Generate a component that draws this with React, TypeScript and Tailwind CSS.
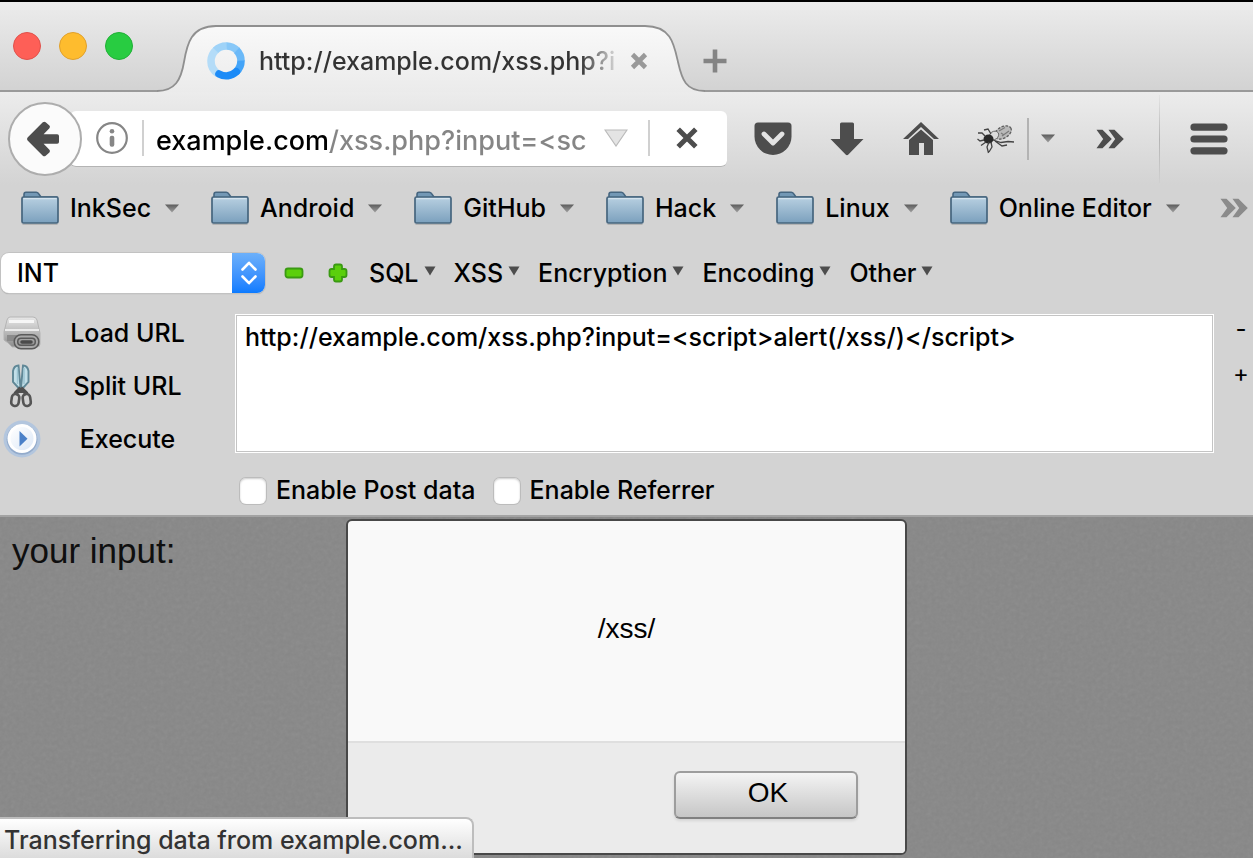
import React from "react";

function Caret({ className = "" }: { className?: string }) {
  return (
    <svg width="14" height="9" viewBox="0 0 14 9" className={"shrink-0 " + className} aria-hidden="true">
      <defs>
        <linearGradient id="caret" x1="0" y1="0" x2="0" y2="1">
          <stop offset="0" stopColor="#5c5c5c" />
          <stop offset="1" stopColor="#a0a0a0" />
        </linearGradient>
      </defs>
      <path d="M0 0.5h14L7 8.5z" fill="url(#caret)" />
    </svg>
  );
}

function SmallCaret() {
  return (
    <svg width="12" height="10" viewBox="0 0 12 10" className="mb-1 shrink-0" aria-hidden="true">
      <path d="M0.5 0.5h11L6 9.5z" fill="#4d4d4d" />
    </svg>
  );
}

function Folder() {
  return (
    <svg width="38" height="34" viewBox="0 0 38 34" className="shrink-0" aria-hidden="true">
      <defs>
        <linearGradient id="folder" x1="0" y1="0" x2="0" y2="1">
          <stop offset="0" stopColor="#b8d0e1" />
          <stop offset="1" stopColor="#7ba0bd" />
        </linearGradient>
      </defs>
      <path d="M1.5 33.4h35" stroke="#b3b3b3" strokeWidth="1.2" />
      <path d="M3 8V3.4Q3 1.2 5 1.2h10.2q1.400 0 2.200 1.200L20 6H36V9H2z" fill="#7398b5" stroke="#466680" strokeWidth="1.600" strokeLinejoin="round" />
      <rect x="1" y="6" width="36" height="26" rx="1.500" fill="url(#folder)" stroke="#46657e" strokeWidth="1.700" />
      <path d="M2.500 7.600h33" stroke="#d4e3ee" strokeWidth="1.300" />
    </svg>
  );
}

function Chevrons({ color }: { color: string }) {
  return (
    <svg width="28" height="20" viewBox="0 0 28 20" className="shrink-0" aria-hidden="true">
      <path d="M0.500 0.800H6.500L15.800 10 6.500 19.200H0.500L7.200 10zM12.500 0.800H18.500L27.800 10 18.500 19.200H12.500L19.200 10z" fill={color} />
    </svg>
  );
}

function Separator({ className = "" }: { className?: string }) {
  return <span className={"w-[2px] shrink-0 " + className} />;
}

function TabStrip() {
  return (
    <header className="flex h-[90px] items-end bg-linear-to-b from-[#ececec] to-[#d2d2d2] shadow-[inset_0_-2px_0_#9a9a9a]">
      <div className="flex h-[90px] w-[157px] shrink-0 items-start gap-[18px] pt-[30px] pl-[13px]">
        <button aria-label="Close window" className="size-7 rounded-full border border-[#e0514b] bg-[#fe5f57]" />
        <button aria-label="Minimize window" className="size-7 rounded-full border border-[#e0a02c] bg-[#febc2e]" />
        <button aria-label="Zoom window" className="size-7 rounded-full border border-[#20b036] bg-[#28cc41]" />
      </div>
      <div className="relative isolate flex h-[68px] w-[548px] shrink-0 items-center gap-[14px] pt-[5px] pr-[57px] pl-[50px]">
        <svg className="absolute inset-0 -z-10 size-full" viewBox="0 0 548 68" preserveAspectRatio="none" aria-hidden="true">
          <defs>
            <linearGradient id="tab" x1="0" y1="0" x2="0" y2="1">
              <stop offset="0" stopColor="#f9f9f9" />
              <stop offset="1" stopColor="#ebebeb" />
            </linearGradient>
          </defs>
          <path
            d="M0 68V66.800C18 66.800 24 56 27 38S34 2 59 2H488C514 2 517 20 521 38S529 66.800 548 66.800V68z"
            fill="url(#tab)"
          />
          <path
            d="M0 67C18 67 24 56 27 38S34 2 59 2H488C514 2 517 20 521 38S529 67 548 67"
            fill="none"
            stroke="#8f8f8f"
            strokeWidth="1.800"
          />
        </svg>
        <svg width="38" height="38" viewBox="0 0 38 38" className="shrink-0" aria-hidden="true">
          <g fill="none" strokeWidth="7.600">
            <path d="M10.800 31.600A15 15 0 0 1 4 19A15 15 0 0 1 9 8" stroke="#b4dcf8" />
            <path d="M8.600 8.400A15 15 0 0 1 20 4" stroke="#9fd3f8" />
            <path d="M19.600 4A15 15 0 0 1 30 8.400" stroke="#88c8f8" />
            <path d="M29.600 8.200A15 15 0 0 1 34 19" stroke="#6bb9f8" />
            <path d="M34 18.600A15 15 0 0 1 29 30" stroke="#43a4f8" />
            <path d="M29.300 29.800A15 15 0 0 1 12 32" stroke="#1c8bf7" strokeLinecap="round" />
          </g>
        </svg>
        <span className="min-w-0 flex-1 overflow-hidden whitespace-nowrap bg-linear-to-r from-[#333] from-90% to-[#33333322] bg-clip-text text-transparent">
          http://example.com/xss.php?i
        </span>
        <button aria-label="Close tab" className="shrink-0">
          <svg width="18" height="18" viewBox="0 0 18 18" aria-hidden="true">
            <path d="M2.500 2.500l13 13M15.500 2.500l-13 13" stroke="#999" strokeWidth="4.600" />
          </svg>
        </button>
      </div>
      <button aria-label="New tab" className="mb-[19px] -ml-[2px] shrink-0">
        <svg width="24" height="24" viewBox="0 0 24 24" aria-hidden="true">
          <path d="M12 0.500v23M0.500 12h23" stroke="#848484" strokeWidth="4.600" />
        </svg>
      </button>
    </header>
  );
}

function Fly() {
  return (
    <svg width="38" height="30" viewBox="0 0 38 30" aria-hidden="true">
      <ellipse cx="26" cy="8.500" rx="9.500" ry="6" transform="rotate(-30 26 8.500)" fill="#b9b9b9" />
      <ellipse cx="26" cy="8.500" rx="9" ry="5.600" transform="rotate(-30 26 8.500)" fill="none" stroke="#5f5f5f" strokeWidth="1.300" strokeDasharray="2.500 1.500" />
      <path d="M22 7l6-3.500M25 12l7-5M24 9l3 2" stroke="#7a7a7a" strokeWidth="1.200" />
      <ellipse cx="17" cy="11.500" rx="5" ry="4" transform="rotate(-35 17 11.500)" fill="#dcdcdc" stroke="#666" strokeWidth="0.900" />
      <ellipse cx="11.500" cy="15" rx="5" ry="4.600" fill="#292929" />
      <path
        d="M8 12L5 9 1 9M7 16L3 17 0.500 15M9 18L4 21.500M12 18l-2 5 1.500 6M14 18l1 5-3 5M16 16l8 2.500 7-1 6 0.500M18 17l7 5 5-1M14 10L11 5 7 6"
        fill="none"
        stroke="#444"
        strokeWidth="1.300"
      />
    </svg>
  );
}

function NavBar() {
  return (
    <nav className="flex h-[93px] items-center bg-linear-to-b from-[#ececec] to-[#d3d3d3] pl-2">
      <button aria-label="Back" className="z-10 flex size-[74px] shrink-0 items-center justify-center rounded-full border-2 border-[#adadad] bg-[#fbfbfb] pr-1">
        <svg width="34" height="36" viewBox="0 0 34 36" aria-hidden="true">
          <path d="M1.600 16.600L16.800 1.200Q18.300 0.200 19.700 1.200L23.400 4.600Q24.600 6 23.400 7.200L17.600 13.200H31.200Q33 13.200 33 15V21Q33 22.800 31.200 22.800H17.600L23.400 28.800Q24.600 30 23.400 31.400L19.700 34.800Q18.300 35.800 16.800 34.800L1.600 19.400Q0.400 18 1.600 16.600z" fill="#4d4d4d" />
        </svg>
      </button>
      <div className="-ml-3 flex h-14 min-w-0 flex-1 items-center rounded-md border-b border-[#b4b4b4] bg-white pl-[26px]">
        <button aria-label="Site information" className="shrink-0">
          <svg width="32" height="32" viewBox="0 0 32 32" aria-hidden="true">
            <circle cx="16" cy="16" r="14.800" fill="none" stroke="#868686" strokeWidth="2.200" />
            <circle cx="16" cy="9.200" r="2.300" fill="#868686" />
            <rect x="13.700" y="13.700" width="4.600" height="11" rx="2" fill="#868686" />
          </svg>
        </button>
        <Separator className="ml-[14px] h-9 bg-[#d0d0d0]" />
        <input
          aria-label="Address"
          defaultValue="example.com/xss.php?input=<sc"
          className="ml-3 h-11 min-w-0 flex-1 bg-linear-to-r from-black from-[174px] to-[#858585] to-[174px] bg-clip-text pt-1 text-[27px] text-transparent caret-black outline-none"
        />
        <button aria-label="Show history" className="ml-3 shrink-0">
          <svg width="24" height="18" viewBox="0 0 24 18" aria-hidden="true">
            <path d="M1 1h22L12 17z" fill="#e4e4e4" stroke="#bababa" strokeWidth="1.200" />
          </svg>
        </button>
        <Separator className="ml-5 h-9 bg-[#d0d0d0]" />
        <button aria-label="Stop" className="mr-[29px] ml-[26px] shrink-0">
          <svg width="22" height="22" viewBox="0 0 22 22" aria-hidden="true">
            <path d="M2.200 2.200l17.600 17.600M19.800 2.200L2.200 19.800" stroke="#4d4d4d" strokeWidth="5" />
          </svg>
        </button>
      </div>
      <div className="ml-[27px] flex shrink-0 items-center">
        <button aria-label="Save to Pocket">
          <svg width="38" height="34" viewBox="0 0 38 34" aria-hidden="true">
            <path d="M4 0.500H34Q37.500 0.500 37.500 4V14.500A18.500 18.500 0 0 1 0.500 14.500V4Q0.500 0.500 4 0.500z" fill="#4d4d4d" />
            <path d="M10 12l9 9 9-9" fill="none" stroke="#e3e3e3" strokeWidth="4.800" strokeLinecap="round" strokeLinejoin="round" />
          </svg>
        </button>
        <button aria-label="Downloads" className="ml-[38px]">
          <svg width="34" height="34" viewBox="0 0 34 34" aria-hidden="true">
            <path d="M11.500 0.500H22.500Q24 0.500 24 2V17H33.500L18.400 32.600Q17 34 15.600 32.600L0.500 17H10V2Q10 0.500 11.500 0.500z" fill="#4d4d4d" />
          </svg>
        </button>
        <button aria-label="Home" className="ml-[39px]">
          <svg width="36" height="34" viewBox="0 0 36 34" aria-hidden="true">
            <path d="M18 0L36 17H31L18 5 5 17H0z" fill="#4d4d4d" />
            <path d="M18 7.500L30 18V33H21V21H16V33H6V18z" fill="#4d4d4d" />
          </svg>
        </button>
        <button aria-label="Firebug" className="ml-[38px]">
          <Fly />
        </button>
        <Separator className="ml-3 h-[42px] bg-[#b3b3b3]" />
        <button aria-label="Firebug menu" className="ml-[11px]">
          <Caret className="w-4" />
        </button>
        <button aria-label="More tools" className="ml-[40px]">
          <Chevrons color="#4d4d4d" />
        </button>
        <span className="ml-[35px] h-[88px] w-px bg-linear-to-b from-[#e4e4e4] via-[#b4b4b4] to-[#d0d0d0]" />
        <button aria-label="Open menu" className="mr-[25px] ml-[30px]">
          <svg width="38" height="32" viewBox="0 0 38 32" aria-hidden="true">
            <path d="M4 4.200H34M4 16H34M4 27.800H34" stroke="#4d4d4d" strokeWidth="7.200" strokeLinecap="round" />
          </svg>
        </button>
      </div>
    </nav>
  );
}

const bookmarks = ["InkSec", "Android", "GitHub", "Hack", "Linux", "Online Editor"];

function BookmarksBar() {
  return (
    <nav className="mb-[9px] flex h-[46px] items-center pr-[5px] pl-[21px]" aria-label="Bookmarks">
      <ul className="flex items-center gap-8">
        {bookmarks.map((name) => (
          <li key={name}>
            <button className="flex items-center whitespace-nowrap">
              <Folder />
              <span className="ml-[11px]">{name}</span>
              <Caret className="ml-[14px]" />
            </button>
          </li>
        ))}
      </ul>
      <button aria-label="More bookmarks" className="ml-auto">
        <Chevrons color="#8b8b8b" />
      </button>
    </nav>
  );
}

const menus = ["SQL", "XSS", "Encryption", "Encoding", "Other"];

function HackMenu() {
  return (
    <div className="flex h-[66px] items-center">
      <div className="relative ml-px h-10 w-[264px] shrink-0">
        <select aria-label="Payload type" className="h-10 w-full appearance-none rounded-lg bg-white pl-4 shadow-[0_0_0_1px_#c2c2c2,0_1px_1px_#999] outline-none">
          <option>INT</option>
        </select>
        <span className="pointer-events-none absolute inset-y-0 right-0 flex w-[33px] items-center justify-center rounded-r-lg bg-linear-to-b from-[#6cb0fa] to-[#0a7bff]">
          <svg width="16" height="24" viewBox="0 0 16 24" aria-hidden="true">
            <path d="M1.500 8.500L8 1.800l6.500 6.700M1.500 15.500L8 22.200l6.500-6.700" fill="none" stroke="#fff" strokeWidth="2.600" strokeLinecap="round" strokeLinejoin="round" />
          </svg>
        </span>
      </div>
      <button aria-label="Decrease" className="ml-[19px] shrink-0">
        <svg width="20" height="20" viewBox="0 0 20 20" aria-hidden="true">
          <rect x="1.500" y="5.500" width="17" height="9" rx="2.500" fill="#5bcf0c" stroke="#3a9a12" strokeWidth="1.800" />
        </svg>
      </button>
      <button aria-label="Increase" className="ml-6 shrink-0">
        <svg width="20" height="20" viewBox="0 0 20 20" aria-hidden="true">
          <path d="M6 3.500Q6 1.500 8 1.500h4q2 0 2 2V6h2.500q2 0 2 2v4q0 2-2 2H14v2.500q0 2-2 2H8q-2 0-2-2V14H3.500q-2 0-2-2V8q0-2 2-2H6z" fill="#5bcf0c" stroke="#3a9a12" strokeWidth="1.800" />
        </svg>
      </button>
      <div className="ml-[21px] flex gap-[18px]">
        {menus.map((name) => (
          <button key={name} className="flex items-center gap-[5px]">
            {name}
            <SmallCaret />
          </button>
        ))}
      </div>
    </div>
  );
}

function LoadIcon() {
  return (
    <svg width="38" height="34" viewBox="0 0 38 34" className="shrink-0" aria-hidden="true">
      <defs>
        <linearGradient id="drive" x1="0" y1="0" x2="0" y2="1">
          <stop offset="0" stopColor="#e8e8e8" />
          <stop offset="1" stopColor="#8c8c8c" />
        </linearGradient>
      </defs>
      <path d="M7 1H30Q33 1 34 4L37 17V28Q37 31 34 31H9Q6 27 1 24V16L4 4Q5 1 7 1z" fill="url(#drive)" stroke="#b4b4b4" />
      <path d="M6 5.500H31" stroke="#f6f6f6" strokeWidth="3" />
      <path d="M2 14H36" stroke="#ececec" strokeWidth="2" />
      <path d="M4 19H14V25H4z" fill="#8a8a8a" />
      <rect x="13" y="20.500" width="21" height="10.500" rx="5" fill="none" stroke="#5a5a5a" strokeWidth="5" />
      <rect x="13" y="20.500" width="21" height="10.500" rx="5" fill="none" stroke="#a8a8a8" strokeWidth="2" />
      <path d="M19 26h9" stroke="#4a4a4a" strokeWidth="3.500" strokeLinecap="round" />
    </svg>
  );
}

function SplitIcon() {
  return (
    <svg width="38" height="44" viewBox="0 0 38 44" className="shrink-0" aria-hidden="true">
      <path d="M16.500 25L10 18V7Q11 1.500 15.500 1.500L17.500 24zM19 25L25.500 18V7Q24.500 1.500 20 1.500L18 24z" fill="#c2dfe8" stroke="#5f8796" strokeWidth="1.900" />
      <path d="M14.500 4V20M21 4V20" stroke="#9cc4d1" strokeWidth="1.500" />
      <path d="M17.800 24L12 30M17.800 24L24 30M17.800 24V29" stroke="#4f4f4f" strokeWidth="4" />
      <rect x="8.500" y="30" width="7.500" height="12" rx="3.600" fill="#d3d3d3" stroke="#555" strokeWidth="2.600" transform="rotate(8 12 36)" />
      <rect x="20" y="30" width="7.500" height="12" rx="3.600" fill="#d3d3d3" stroke="#555" strokeWidth="2.600" transform="rotate(-8 24 36)" />
    </svg>
  );
}

function ExecuteIcon() {
  return (
    <svg width="38" height="38" viewBox="0 0 38 38" className="shrink-0" aria-hidden="true">
      <defs>
        <linearGradient id="playFace" x1="0" y1="0" x2="1" y2="1">
          <stop offset="0" stopColor="#ffffff" />
          <stop offset="1" stopColor="#dce8f7" />
        </linearGradient>
      </defs>
      <circle cx="19" cy="19" r="18.500" fill="#b3c6de" />
      <circle cx="19" cy="19.300" r="15.400" fill="#93abcb" />
      <circle cx="19" cy="18.500" r="14.500" fill="#fff" />
      <circle cx="19" cy="18.500" r="11.500" fill="url(#playFace)" />
      <path d="M16.500 11L24.500 18.700L16.500 26.500z" fill="#4a80c8" />
    </svg>
  );
}

const actions = [
  { name: "Load URL", icon: <LoadIcon /> },
  { name: "Split URL", icon: <SplitIcon /> },
  { name: "Execute", icon: <ExecuteIcon /> },
];

function CheckOption({ label }: { label: string }) {
  return (
    <label className="flex items-center gap-[10px]">
      <input type="checkbox" className="size-[26px] appearance-none rounded-md bg-white shadow-[0_0_0_1px_#bcbcbc,inset_0_1px_2px_#ccc] checked:bg-[#2f87fb]" />
      {label}
    </label>
  );
}

function HackPanel() {
  return (
    <div className="flex items-start">
      <div className="flex w-[235px] shrink-0 flex-col pl-[3px]">
        {actions.map((action) => (
          <button key={action.name} className="flex h-[53px] items-center">
            {action.icon}
            <span className="w-[173px] text-center">{action.name}</span>
          </button>
        ))}
      </div>
      <div className="min-w-0 flex-1 pt-2">
        <textarea
          aria-label="URL"
          defaultValue="http://example.com/xss.php?input=<script>alert(/xss/)</script>"
          className="block h-[139px] w-full resize-none border border-[#c0c0c0] bg-white px-[9px] py-[7px] leading-[30px] whitespace-nowrap outline outline-white -outline-offset-1 inset-ring inset-ring-[#c4c4c4]"
        />
        <div className="mt-[21px] flex gap-[18px] pb-2 pl-[5px] leading-[33px]">
          <CheckOption label="Enable Post data" />
          <CheckOption label="Enable Referrer" />
        </div>
      </div>
      <div className="flex w-[39px] shrink-0 flex-col items-end pt-2 pr-1 text-[24px] leading-none font-normal">
        <button aria-label="Shrink" className="h-[45px] w-4 pb-4 text-center">-</button>
        <button aria-label="Grow" className="h-[45px] w-4 pb-4 text-center">+</button>
      </div>
    </div>
  );
}

function PageArea() {
  return (
    <main className="relative isolate flex flex-1 justify-center overflow-hidden border-t-2 border-[#a3a3a3] bg-[#878787] pt-[2px]">
      <svg className="absolute inset-0 -z-10 size-full opacity-10" aria-hidden="true">
        <filter id="grain">
          <feTurbulence type="fractalNoise" baseFrequency="0.25" numOctaves="3" />
          <feColorMatrix type="saturate" values="0" />
        </filter>
        <rect width="100%" height="100%" filter="url(#grain)" />
      </svg>
      <p className="absolute top-[14px] left-3 font-['Liberation_Sans',sans-serif] text-[35px] leading-10 font-normal text-[#0f0f0f]">your input:</p>
      <section
        role="dialog"
        aria-label="Alert"
        className="mb-[3px] flex w-[561px] flex-col overflow-hidden rounded-md border-2 border-[#484848] bg-[#f9f9f9] font-['Liberation_Sans',sans-serif] text-[28px] font-normal"
      >
        <p className="flex h-[220px] items-center justify-center pb-1">/xss/</p>
        <div className="flex h-[112px] items-start justify-end border-t-2 border-[#dfdfdf] bg-[#ebebeb] pt-7 pr-[47px]">
          <button className="h-12 w-[184px] rounded-md border-2 border-[#9d9d9d] border-b-[#808080] bg-linear-to-b from-[#f4f4f4] to-[#c6c6c6] pb-1 pl-1 leading-none shadow-[0_2px_3px_#00000018]">
            OK
          </button>
        </div>
      </section>
      <div
        role="status"
        className="absolute bottom-0 left-0 h-[41px] w-[474px] rounded-tr-lg border-t-2 border-r-2 border-[#bdbdbd] bg-linear-to-b from-white to-[#dcdcdc] pl-1 leading-[42px] whitespace-nowrap text-[#333]"
      >
        Transferring data from example.com...
      </div>
    </main>
  );
}

export default function App() {
  return (
    <div className="flex min-h-screen flex-col overflow-x-hidden border-t-2 border-black bg-[#d3d3d3] font-['Inter',sans-serif] text-[25px] leading-[30px] font-medium text-black">
      <TabStrip />
      <NavBar />
      <BookmarksBar />
      <HackMenu />
      <HackPanel />
      <PageArea />
    </div>
  );
}
